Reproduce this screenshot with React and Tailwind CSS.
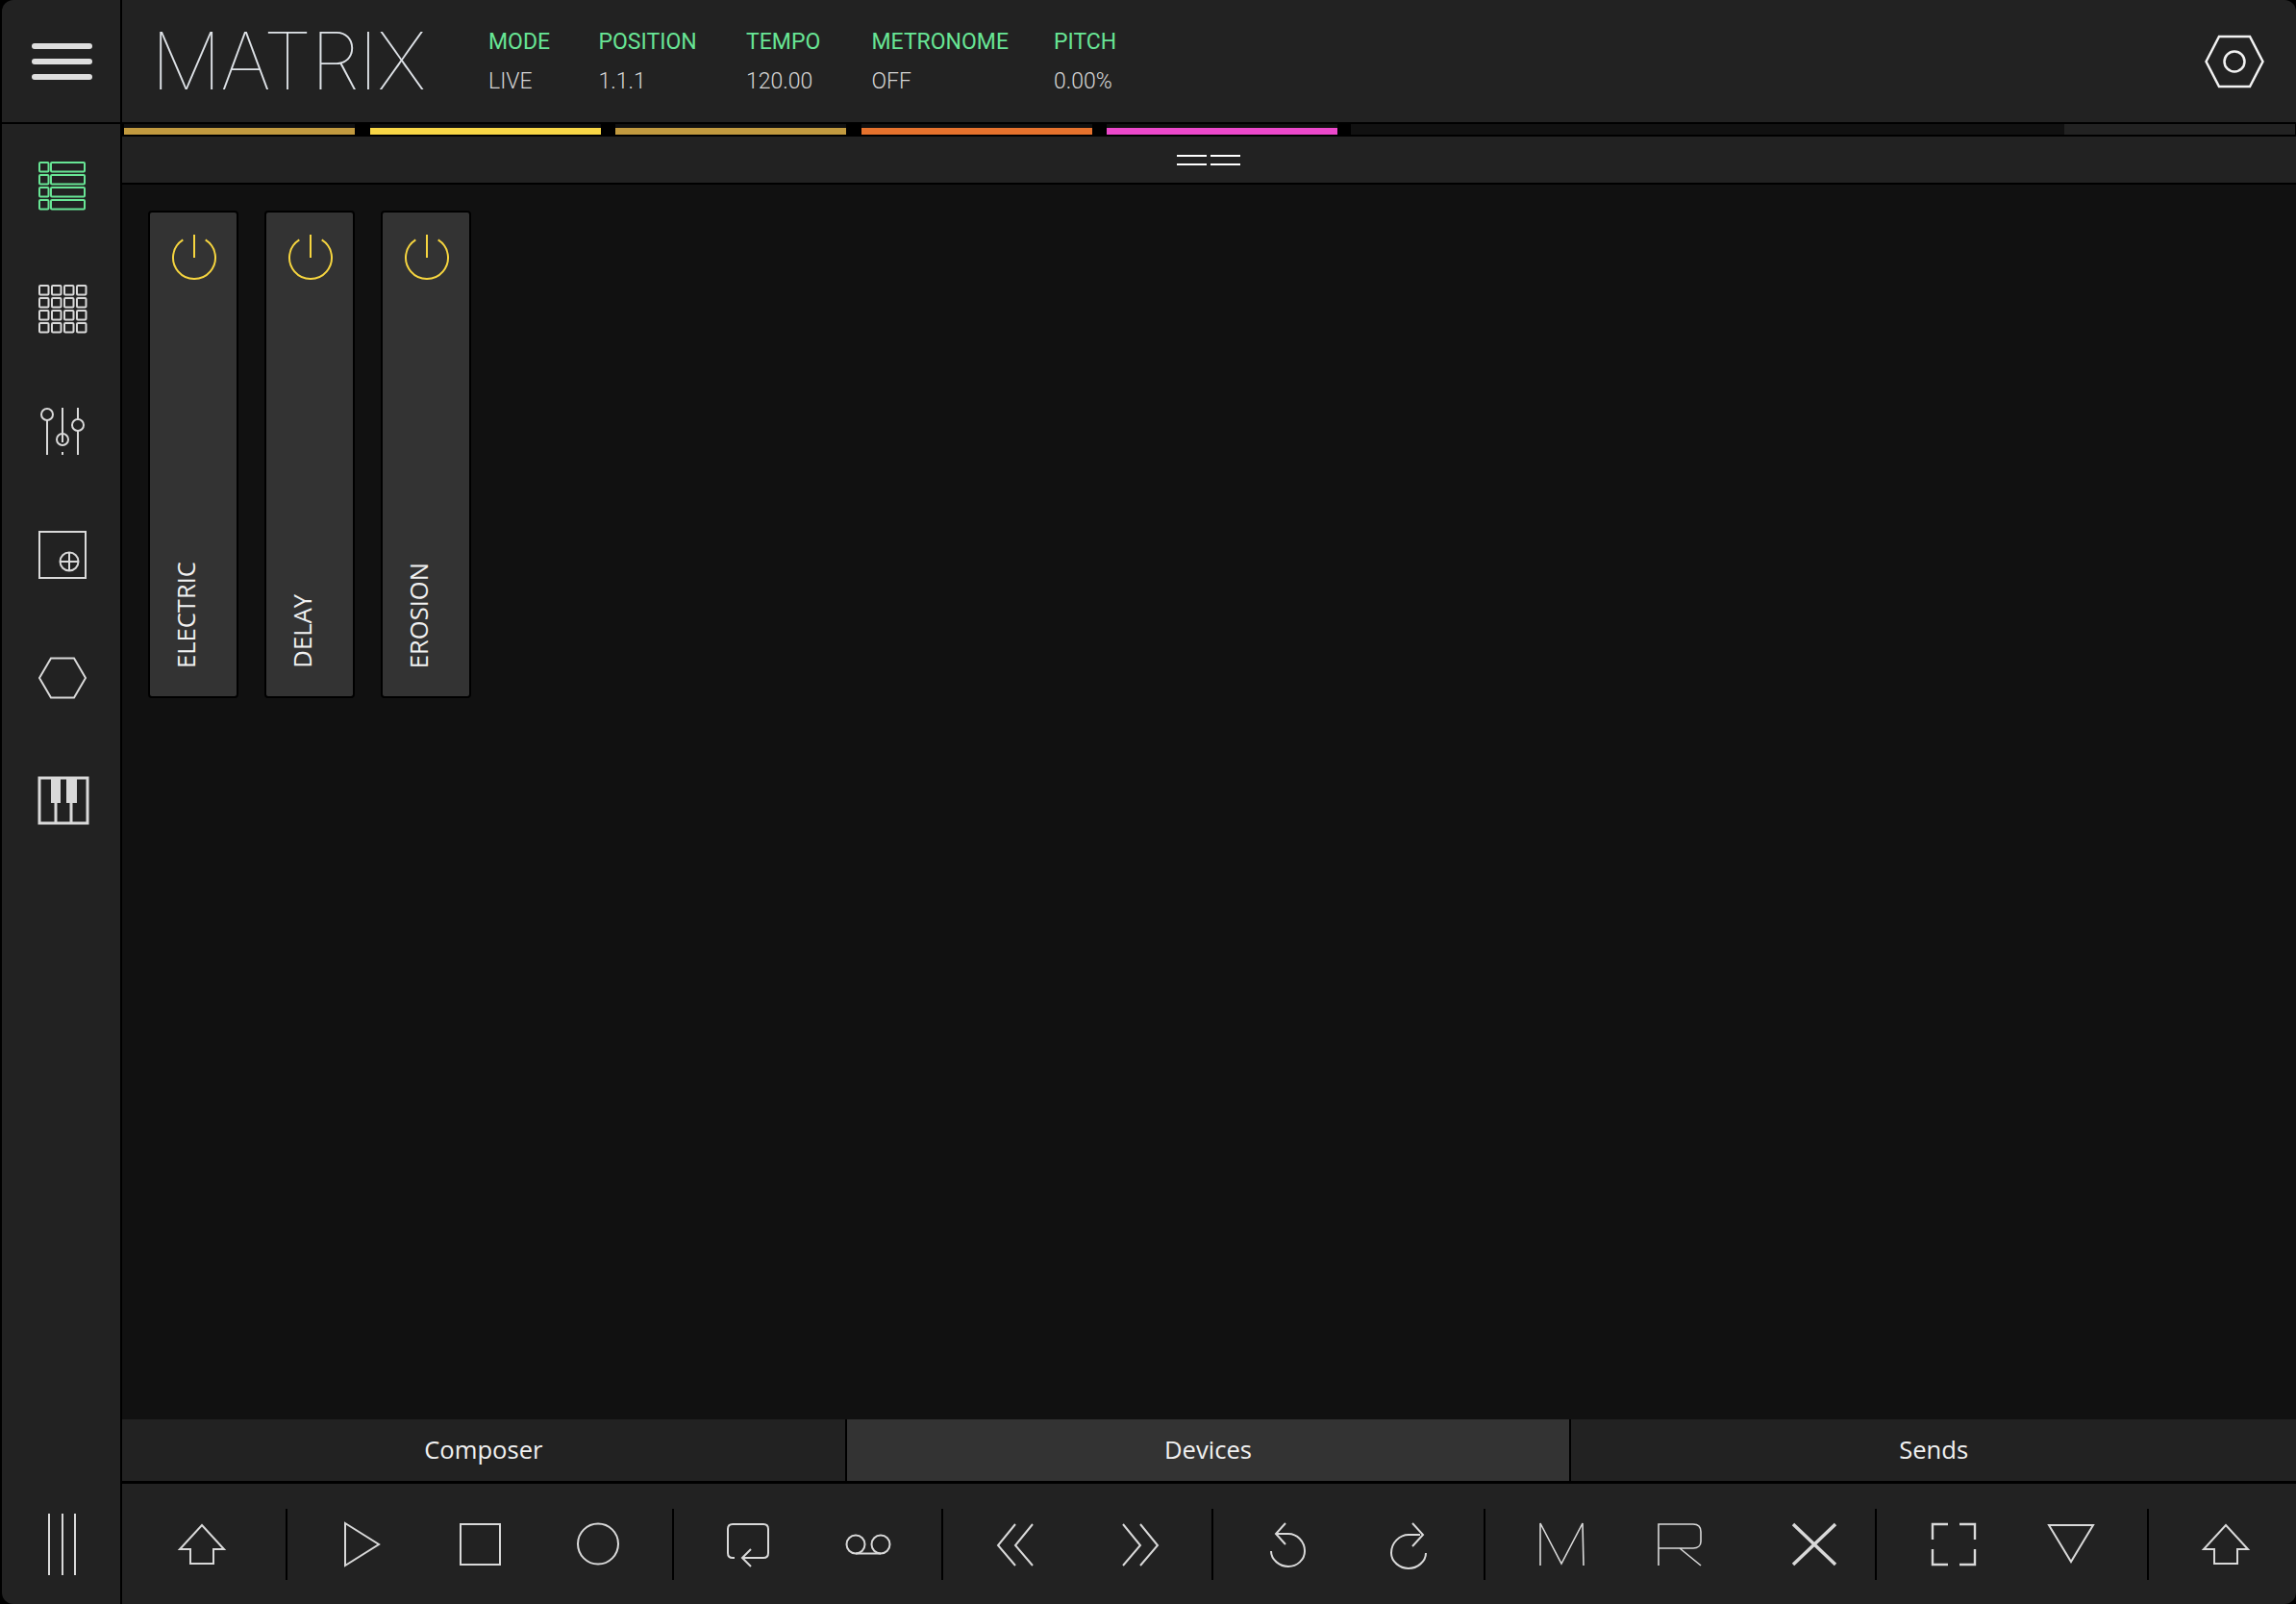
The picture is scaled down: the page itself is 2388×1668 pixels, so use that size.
import React from 'react';

const GREEN = '#68e595';
const ICON = '#d9d9d9';
const YELLOW = '#f6d53f';

const STATS = [
  { label: 'MODE', value: 'LIVE', w: 'w-[60px]' },
  { label: 'POSITION', value: '1.1.1', w: 'w-[99px]' },
  { label: 'TEMPO', value: '120.00', w: 'w-[76px]' },
  { label: 'METRONOME', value: 'OFF', w: 'w-[135px]' },
  { label: 'PITCH', value: '0.00%', w: 'w-[70px]' },
];

const TRACKS = ['bg-[#c29a3f]', 'bg-[#f8d646]', 'bg-[#c29a3f]', 'bg-[#e6722d]', 'bg-[#ec48cb]'];

const DEVICES = ['ELECTRIC', 'DELAY', 'EROSION'];

const Svg = ({ size = 60, stroke = ICON, sw = 2, children }) => (
  <svg width={size} height={size} viewBox={`0 0 ${size} ${size}`} fill="none" stroke={stroke} strokeWidth={sw}>
    {children}
  </svg>
);

// sidebar icons
const ListIcon = () => (
  <Svg stroke={GREEN}>
    {[5, 18, 31, 44].map((y) => (
      <g key={y}>
        <rect x="6" y={y + 1} width="9.5" height="9.5" rx="1" />
        <rect x="18" y={y + 1} width="35" height="9.5" rx="1" />
      </g>
    ))}
  </Svg>
);

const GridIcon = () => (
  <Svg>
    {[5, 18, 31, 44].map((y) =>
      [5, 18, 31, 44].map((x) => <rect key={x + '-' + y} x={x + 1} y={y + 1} width="9.5" height="9.5" rx="1" />)
    )}
  </Svg>
);

const SlidersIcon = () => (
  <Svg>
    <path d="M14 18V54M30 5V41M30 51V54M46 5V18M46 29V54" />
    <circle cx="14" cy="12" r="6" />
    <circle cx="30" cy="38" r="6" />
    <circle cx="46" cy="23" r="6" />
  </Svg>
);

const AddIcon = () => (
  <Svg>
    <rect x="6" y="6" width="48" height="48" />
    <circle cx="37" cy="37" r="9.5" />
    <path d="M27.5 37H46.5M37 27.5V46.5" />
  </Svg>
);

const HexIcon = () => (
  <Svg>
    <path d="M6 30L18 9.5H42L54 30L42 50.5H18Z" />
  </Svg>
);

const PianoIcon = () => (
  <Svg sw={3}>
    <rect x="6" y="6" width="50" height="47" />
    <path d="M23 6V53M39 6V53" />
    <rect x="18" y="6" width="10" height="26" fill={ICON} stroke="none" />
    <rect x="34" y="6" width="11" height="26" fill={ICON} stroke="none" />
  </Svg>
);

// toolbar icons
const UpIcon = () => (
  <Svg>
    <path d="M30 10L53 35H42V50H18V35H7Z" />
  </Svg>
);
const PlayIcon = () => (
  <Svg>
    <path d="M13 8L48 30L13 52Z" />
  </Svg>
);
const StopIcon = () => (
  <Svg>
    <rect x="10" y="9" width="41" height="42" />
  </Svg>
);
const RecIcon = () => (
  <Svg>
    <circle cx="30" cy="29.5" r="21" />
  </Svg>
);
const LoopIcon = () => (
  <Svg>
    <path d="M16 44H14C11 44 9 42 9 39V14C9 11 11 9 14 9H46C49 9 51 11 51 14V39C51 42 49 44 46 44H24" />
    <path d="M33 35L24 44L33 53" />
  </Svg>
);
const TapeIcon = () => (
  <Svg>
    <circle cx="17" cy="30" r="9.5" />
    <circle cx="43" cy="30" r="9.5" />
    <path d="M17 39.5H43" />
  </Svg>
);
const RewIcon = () => (
  <Svg>
    <path d="M28 9L10 31L28 52M46 9L28 31L46 52" />
  </Svg>
);
const FwdIcon = () => (
  <Svg>
    <path d="M14 9L32 31L14 52M32 9L50 31L32 52" />
  </Svg>
);
const UndoIcon = () => (
  <Svg>
    <path d="M18 20H30C39 20 47 28 47 38C47 47 39 54 30 54C21 54 12 47 12 38" transform="translate(0 -1)" />
    <path d="M27 8L17 19L27 30" />
  </Svg>
);
const RedoIcon = () => (
  <Svg>
    <path d="M42 20H30C21 20 12 28 12 39C12 48 21 55 30 55C39 55 48 48 48 39" />
    <path d="M34 8L45 20L34 32" />
  </Svg>
);
const MIcon = () => (
  <Svg sw={1.6}>
    <path d="M8 52L8 8L30 50L52 8L53 52" />
  </Svg>
);
const RIcon = () => (
  <Svg sw={1.6}>
    <path d="M8 52V9H44C49 9 52 12 52 17V27C52 31 49 34 44 34H8M30 34L52 52" />
  </Svg>
);
const CloseIcon = () => (
  <Svg sw={3.5}>
    <path d="M8 9L52 51M52 9L8 51" />
  </Svg>
);
const FrameIcon = () => (
  <Svg sw={2.4}>
    <path d="M8 25V9H24M36 9H52V25M8 35V51H24M36 51H52V35" />
  </Svg>
);
const DownIcon = () => (
  <Svg>
    <path d="M7 10H53L30 48Z" />
  </Svg>
);

const Separator = () => <div className="w-[2px] h-[74px] bg-black shrink-0" />;

const Tool = ({ icon: Icon, w = 'w-[123px]' }) => (
  <div className={`${w} h-full flex items-center justify-center shrink-0`}>
    <Icon />
  </div>
);

const Side = ({ icon: Icon }) => (
  <div className="h-[128px] flex items-center justify-center">
    <Icon />
  </div>
);

const PowerIcon = () => (
  <svg width="60" height="60" viewBox="0 0 60 60" fill="none" stroke={YELLOW} strokeWidth="2">
    <path d="M18.3 11.3A22 22 0 1 0 41.7 11.3" />
    <path d="M30 6V30" />
  </svg>
);

const Device = ({ name }) => (
  <div className="w-[94px] h-[507px] bg-[#333333] border-2 border-black rounded-[4px] flex flex-col">
    <div className="flex justify-center pl-[1px] pt-[17px]">
      <PowerIcon />
    </div>
    <div className="mt-auto pb-[29px] pl-[22px] flex">
      <span className="[writing-mode:vertical-rl] rotate-180 text-[25.6px] leading-[32px] text-[#f1f1f1]">{name}</span>
    </div>
  </div>
);

const App = () => (
  <div className="w-[2388px] h-[1668px] bg-black pl-[2px] overflow-hidden font-['Open_Sans',sans-serif]">
    <div className="w-full h-full rounded-xl overflow-hidden flex flex-col bg-[#222222]">
      {/* top bar */}
      <div className="h-[129px] shrink-0 flex border-b-2 border-black">
        <div className="w-[125px] shrink-0 border-r-2 border-black flex flex-col items-center justify-center gap-[10px] pl-[2px] pt-[1px]">
          <div className="w-[63px] h-[6px] rounded-full bg-[#dedede]" />
          <div className="w-[63px] h-[6px] rounded-full bg-[#dedede]" />
          <div className="w-[63px] h-[6px] rounded-full bg-[#dedede]" />
        </div>
        <div className="flex-1 flex items-center pl-[30px] pr-[33px]">
          <div className="w-[351px] font-['Inter',sans-serif] font-thin text-[82px] leading-none text-[#dfe3e8] tracking-[-1px]">MATRIX</div>
          <div className="flex gap-[54.5px]">
            {STATS.map((s) => (
              <div key={s.label} className={`${s.w} font-['Roboto',sans-serif] text-[23px] leading-[41px] whitespace-nowrap`}>
                <div className="text-[#68e595]">{s.label}</div>
                <div className="text-[#d6d6d6] font-light">{s.value}</div>
              </div>
            ))}
          </div>
          <div className="ml-auto">
            <svg width="62" height="56" viewBox="0 0 62 56" fill="none" stroke="#f2f2f2" strokeWidth="2.5">
              <path d="M1.5 28L15 2H47L60.5 28L47 54H15Z" />
              <circle cx="31" cy="28" r="10.5" />
            </svg>
          </div>
        </div>
      </div>

      <div className="flex-1 flex min-h-0">
        {/* left rail */}
        <div className="w-[125px] shrink-0 border-r-2 border-black flex flex-col pl-[2px]">
          <Side icon={ListIcon} />
          <Side icon={GridIcon} />
          <Side icon={SlidersIcon} />
          <Side icon={AddIcon} />
          <Side icon={HexIcon} />
          <Side icon={PianoIcon} />
          <div className="mt-auto h-[125px] flex items-center justify-center gap-[11.5px]">
            <div className="w-[2px] h-[64px] bg-[#d9d9d9]" />
            <div className="w-[2px] h-[64px] bg-[#d9d9d9]" />
            <div className="w-[2px] h-[64px] bg-[#d9d9d9]" />
          </div>
        </div>

        {/* main */}
        <div className="flex-1 min-w-0 flex flex-col">
          <div className="h-[13px] shrink-0 bg-black flex pl-[2px] gap-[15.5px]">
            {TRACKS.map((c, i) => (
              <div key={i} className="w-[240px] h-[11px] bg-[#111111] flex items-end">
                <div className={`${c} w-full h-[7px]`} />
              </div>
            ))}
            <div className="ml-[-2px] w-[742px] h-[11px] bg-[#111111]" />
            <div className="ml-[-15.5px] w-[240px] h-[11px] bg-[#222222]" />
          </div>

          <div className="h-[50px] shrink-0 border-b-2 border-black flex items-center justify-center gap-[4px] pr-[2px]">
            <div className="w-[31px] h-[11px] border-y-2 border-white" />
            <div className="w-[31px] h-[11px] border-y-2 border-white" />
          </div>

          <div className="flex-1 min-h-0 bg-[#111111] flex items-start gap-[27px] p-[27px]">
            {DEVICES.map((d) => (
              <Device key={d} name={d} />
            ))}
          </div>

          <div className="h-[67px] shrink-0 grid grid-cols-3 border-b-[3px] border-black text-[25.6px] text-[#f1f1f1]">
            <div className="flex items-center justify-center border-r-2 border-black">Composer</div>
            <div className="flex items-center justify-center border-r-2 border-black bg-[#333333]">Devices</div>
            <div className="flex items-center justify-center">Sends</div>
          </div>

          <div className="h-[125px] shrink-0 flex items-center">
            <div className="w-[170px] h-full flex items-center justify-center pr-[5px]"><Tool icon={UpIcon} /></div>
            <Separator />
            <div className="w-[400px] h-full flex items-center justify-center">
              <Tool icon={PlayIcon} />
              <Tool icon={StopIcon} />
              <Tool icon={RecIcon} />
            </div>
            <Separator />
            <div className="w-[278px] h-full flex items-center justify-center">
              <Tool icon={LoopIcon} w="w-[125px]" />
              <Tool icon={TapeIcon} w="w-[125px]" />
            </div>
            <Separator />
            <div className="w-[279px] h-full flex items-center justify-center">
              <Tool icon={RewIcon} w="w-[126px]" />
              <Tool icon={FwdIcon} w="w-[126px]" />
            </div>
            <Separator />
            <div className="w-[281px] h-full flex items-center justify-center">
              <Tool icon={UndoIcon} w="w-[125px]" />
              <Tool icon={RedoIcon} w="w-[125px]" />
            </div>
            <Separator />
            <div className="w-[405px] h-full flex items-center pl-[17px]">
              <Tool icon={MIcon} />
              <Tool icon={RIcon} w="w-[123px]" />
              <Tool icon={CloseIcon} w="w-[157px]" />
            </div>
            <Separator />
            <div className="w-[281px] h-full flex items-center justify-center">
              <Tool icon={FrameIcon} w="w-[122px]" />
              <Tool icon={DownIcon} w="w-[122px]" />
            </div>
            <Separator />
            <div className="flex-1 h-full flex items-center justify-center pl-[6px]"><Tool icon={UpIcon} /></div>
          </div>
        </div>
      </div>
    </div>
  </div>
);

export default App;
